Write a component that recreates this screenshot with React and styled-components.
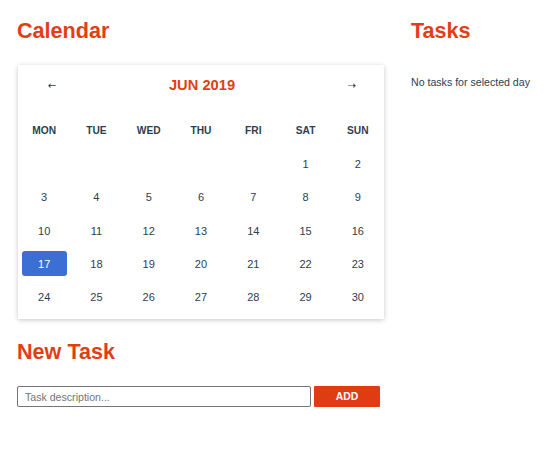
import React from "react";
import styled, { createGlobalStyle } from "styled-components";

const Global = createGlobalStyle`
  html, body { margin: 0; padding: 0; background: #fff; }
  body {
    font-family: "Liberation Sans", Arial, sans-serif;
    color: #2c3e50;
  }
`;

const ORANGE = "#e23e16";

const Page = styled.div`
  display: flex;
  gap: 27px;
  padding: 18.4px 0 0 17px;
  align-items: flex-start;
`;

const LeftCol = styled.div`
  width: 367px;
  display: flex;
  flex-direction: column;
`;

const RightCol = styled.div`
  display: flex;
  flex-direction: column;
`;

const Heading = styled.h2`
  margin: 0 0 20.6px;
  font-size: 21.6px;
  line-height: 26px;
  font-weight: 700;
  color: ${ORANGE};
`;

const Card = styled.div`
  background: #fff;
  box-shadow: 0 1px 5px rgba(0, 0, 0, 0.22);
  padding: 8px 0 5.3px;
  margin: 0 0 20px 1px;
`;

const CalHeader = styled.div`
  height: 25px;
  display: flex;
  align-items: center;
  justify-content: space-between;
  padding: 0 27px 0 29px;
  margin-bottom: 15.5px;
`;

const Arrow = styled.button`
  border: 0;
  background: none;
  padding: 0;
  font-family: "DejaVu Sans", "Liberation Sans", sans-serif;
  font-size: 10px;
  color: #2c3e50;
  cursor: pointer;
  width: 10px;
`;

const Month = styled.div`
  font-size: 14.7px;
  font-weight: 700;
  color: ${ORANGE};
`;

const Grid = styled.div`
  display: grid;
  grid-template-columns: repeat(7, 1fr);
  grid-auto-rows: 33.45px;
`;

const WeekDay = styled.div`
  display: flex;
  align-items: center;
  justify-content: center;
  font-size: 10.2px;
  font-weight: 700;
  color: #2c3e50;
`;

const DayCell = styled.div`
  display: flex;
  align-items: center;
  justify-content: center;
`;

const Day = styled.div`
  width: 45px;
  height: 25px;
  border-radius: 3px;
  display: flex;
  align-items: center;
  justify-content: center;
  font-size: 11px;
  color: ${(p) => (p.$selected ? "#fff" : "#2c3e50")};
  background: ${(p) => (p.$selected ? "#3b6fd3" : "transparent")};
`;

const Form = styled.div`
  display: flex;
  gap: 3px;
  width: 363px;
`;

const Input = styled.input`
  flex: 1;
  height: 21px;
  box-sizing: border-box;
  border: 1px solid #767676;
  border-radius: 2px;
  padding: 0 7px;
  font-family: "Liberation Sans", Arial, sans-serif;
  font-size: 10.6px;
  color: #2c3e50;
  &::placeholder { color: #757575; }
`;

const AddButton = styled.button`
  width: 66px;
  height: 21px;
  border: 0;
  border-radius: 1px;
  background: #e03c13;
  color: #fff;
  font-family: "Liberation Sans", Arial, sans-serif;
  font-weight: 700;
  font-size: 10.4px;
  padding: 0;
`;

const Empty = styled.p`
  margin: 11.5px 0 0;
  font-size: 10.6px;
  line-height: 13px;
  color: #2c3e50;
`;

const weekdays = ["MON", "TUE", "WED", "THU", "FRI", "SAT", "SUN"];

export default function App() {
  const cells = [];
  for (let i = 0; i < 5; i++) cells.push(null);
  for (let d = 1; d <= 30; d++) cells.push(d);

  return (
    <>
      <Global />
      <Page>
        <LeftCol>
          <Heading>Calendar</Heading>
          <Card>
            <CalHeader>
              <Arrow>←</Arrow>
              <Month>JUN 2019</Month>
              <Arrow>⇢</Arrow>
            </CalHeader>
            <Grid>
              {weekdays.map((w) => (
                <WeekDay key={w}>{w}</WeekDay>
              ))}
              {cells.map((d, i) => (
                <DayCell key={i}>
                  {d && <Day $selected={d === 17}>{d}</Day>}
                </DayCell>
              ))}
            </Grid>
          </Card>
          <Heading>New Task</Heading>
          <Form>
            <Input placeholder="Task description..." />
            <AddButton>ADD</AddButton>
          </Form>
        </LeftCol>
        <RightCol>
          <Heading>Tasks</Heading>
          <Empty>No tasks for selected day</Empty>
        </RightCol>
      </Page>
    </>
  );
}
